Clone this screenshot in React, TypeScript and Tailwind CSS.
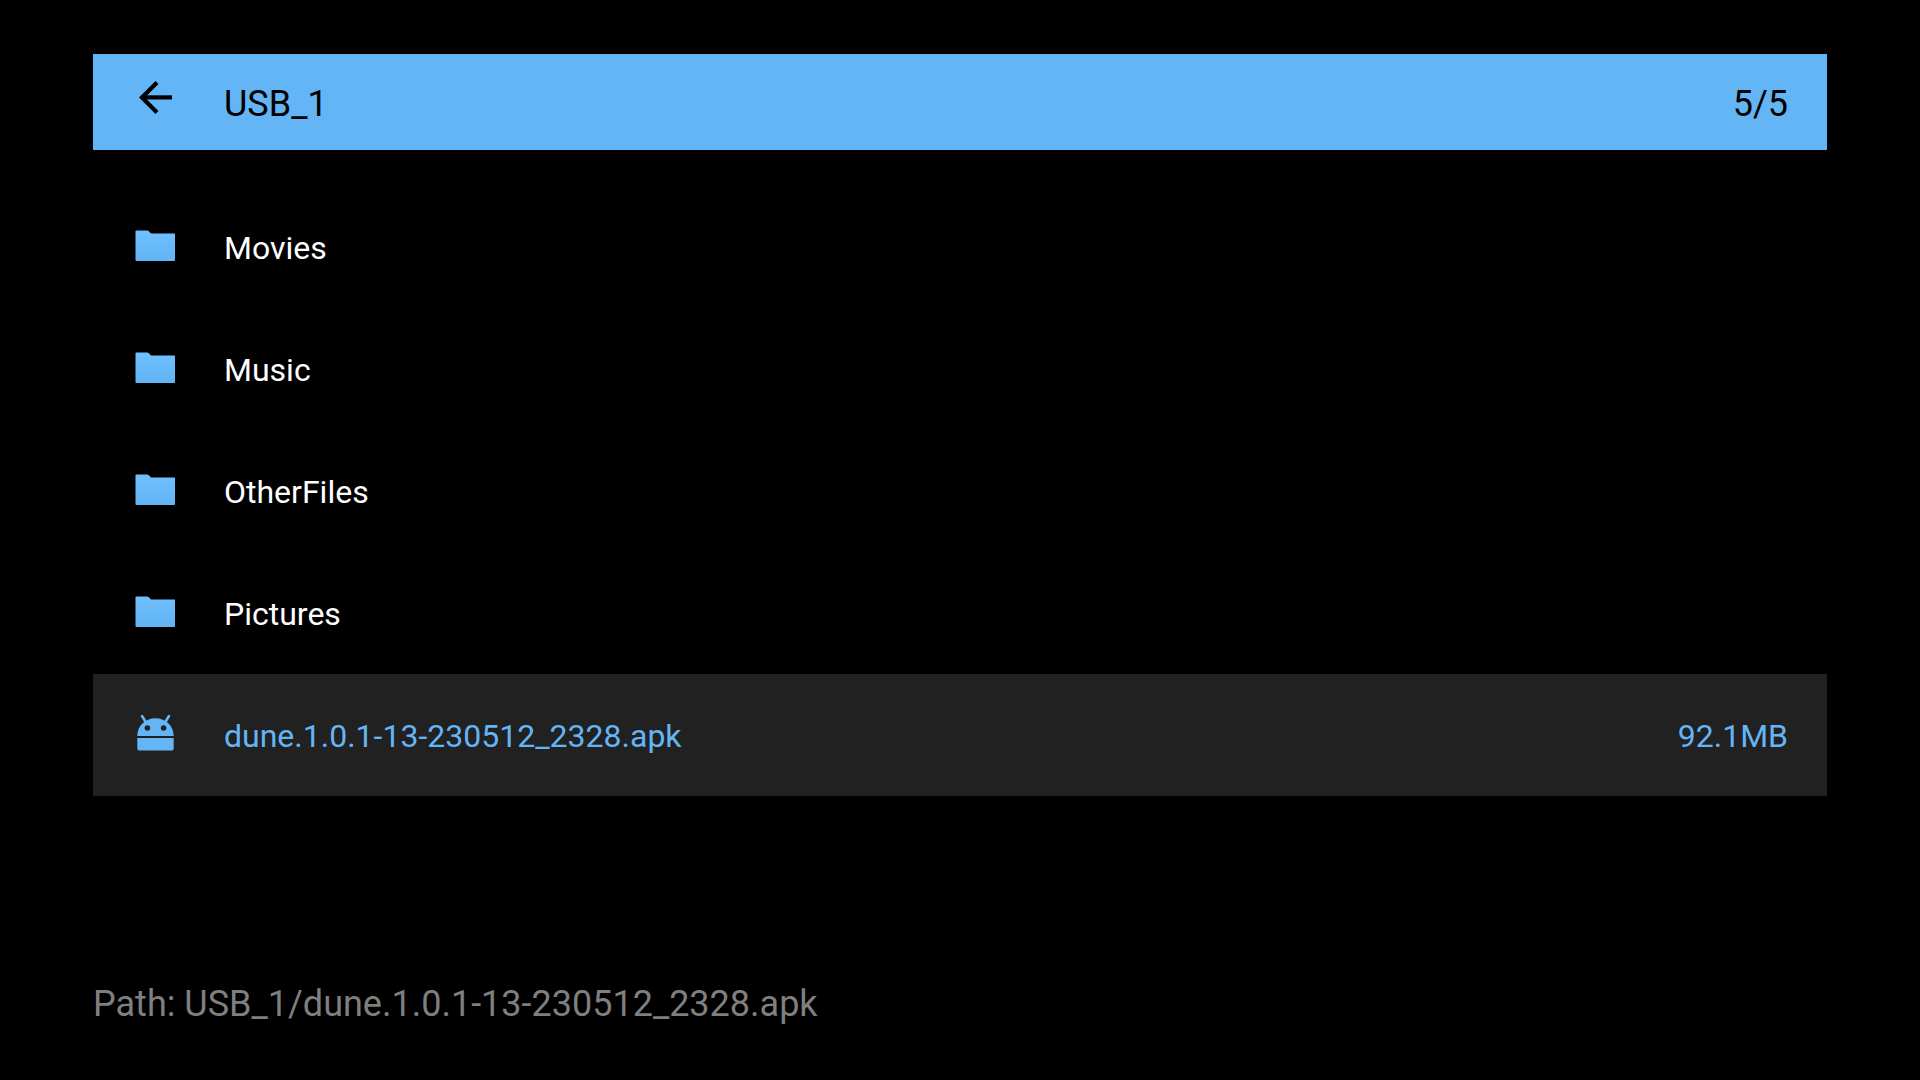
import { useState } from 'react';

type Entry = {
  name: string;
  kind: 'folder' | 'apk';
  size?: string;
};

const entries: Entry[] = [
  { name: 'Movies', kind: 'folder' },
  { name: 'Music', kind: 'folder' },
  { name: 'OtherFiles', kind: 'folder' },
  { name: 'Pictures', kind: 'folder' },
  { name: 'dune.1.0.1-13-230512_2328.apk', kind: 'apk', size: '92.1MB' },
];

function BackIcon() {
  return (
    <svg viewBox="0 0 48 48" className="w-12 h-12" fill="none" stroke="currentColor" strokeWidth="4.2" aria-hidden="true">
      <path d="M41 23.400H12" />
      <path d="M26 8.400l-15 15 15 15" />
    </svg>
  );
}

function FolderIcon() {
  return (
    <svg viewBox="0 0 40 32" className="w-10 h-8" aria-hidden="true">
      <defs>
        <linearGradient id="folder" x1="0" y1="0" x2="0" y2="1">
          <stop offset="0" stopColor="#70c0ff" />
          <stop offset="1" stopColor="#61b3f3" />
        </linearGradient>
      </defs>
      <path
        d="M1.500.500H12q1 0 1.800.8L16 3.400h23.200a1 1 0 0 1 1 1v25.500a1 1 0 0 1-1 1H1.500a1 1 0 0 1-1-1V1.500a1 1 0 0 1 1-1z"
        fill="url(#folder)"
      />
    </svg>
  );
}

function ApkIcon() {
  return (
    <svg viewBox="0 0 40 40" className="w-10 h-10" fill="#64b5f6" aria-hidden="true">
      <path d="M7 2l4 6.500M34 2l-4 6.500" fill="none" stroke="#64b5f6" strokeWidth="2.6" strokeLinecap="round" />
      <path
        fillRule="evenodd"
        d="M2.300 22C2.300 12 10 4.200 20.500 4.200S38.700 12 38.700 22zM12.400 11.200a2.800 2.800 0 1 0 0 5.600 2.800 2.800 0 0 0 0-5.600zM28.600 11.200a2.800 2.800 0 1 0 0 5.600 2.800 2.800 0 0 0 0-5.600z"
      />
      <path d="M2.300 24h36.400v10.600a2 2 0 0 1-2 2H4.300a2 2 0 0 1-2-2z" />
    </svg>
  );
}

function App() {
  const [selected, setSelected] = useState(entries.length - 1);

  return (
    <div className="min-h-screen bg-black px-[93px] pt-[54px] pb-14 flex flex-col font-[Roboto,sans-serif]">
      {/* Title bar */}
      <header className="h-24 bg-[#64b5f6] text-black flex items-center pr-[39px]">
        <button type="button" aria-label="Back" className="w-[131px] flex justify-center pr-[7px] pb-2">
          <BackIcon />
        </button>
        <h1 className="flex-1 pt-1 text-4xl">USB_1</h1>
        <span className="pt-1 text-4xl">{selected + 1}/{entries.length}</span>
      </header>

      {/* File list */}
      <ul className="flex-1 pt-9">
        {entries.map((entry, index) => (
          <li key={entry.name}>
            <button
              type="button"
              onClick={() => setSelected(index)}
              className={`w-full h-[122px] flex items-center pr-[39px] text-left text-[32px] ${
                index === selected ? 'bg-[#212121] text-[#64b5f6]' : 'text-white'
              }`}
            >
              <span className="w-[131px] flex justify-center pr-[7px] pb-0.5">
                {entry.kind === 'folder' ? <FolderIcon /> : <ApkIcon />}
              </span>
              <span className="flex-1 pt-0.5">{entry.name}</span>
              {entry.size && <span className="pt-0.5">{entry.size}</span>}
            </button>
          </li>
        ))}
      </ul>

      {/* Current path */}
      <footer className="text-4xl text-[#7f7f7f]">
        Path: USB_1/{entries[selected].name}
      </footer>
    </div>
  );
}

export default App;
